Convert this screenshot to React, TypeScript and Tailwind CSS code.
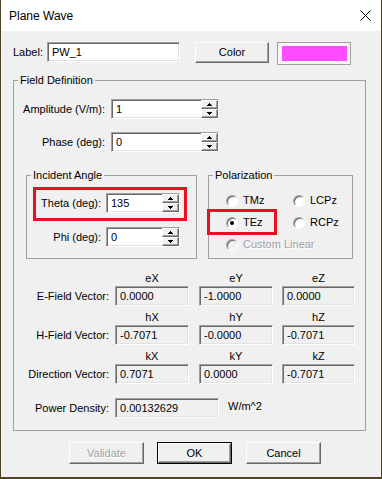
import type React from "react";

const sunken =
  "border border-[#a0a0a0] border-r-white border-b-white shadow-[inset_1px_1px_0_#696969,inset_-1px_-1px_0_#e3e3e3]";
const raised =
  "border border-white border-r-[#696969] border-b-[#696969] shadow-[inset_-1px_-1px_0_#a0a0a0]";

function Arrow({ up }: { up?: boolean }) {
  return (
    <svg width="5" height="3" viewBox="0 0 5 3" shapeRendering="crispEdges">
      {up ? (
        <>
          <rect x="2" y="0" width="1" height="1" fill="#000" />
          <rect x="1" y="1" width="3" height="1" fill="#000" />
          <rect x="0" y="2" width="5" height="1" fill="#000" />
        </>
      ) : (
        <>
          <rect x="0" y="0" width="5" height="1" fill="#000" />
          <rect x="1" y="1" width="3" height="1" fill="#000" />
          <rect x="2" y="2" width="1" height="1" fill="#000" />
        </>
      )}
    </svg>
  );
}

function SpinBtn({ up }: { up?: boolean }) {
  return (
    <div className={`flex h-[9px] items-center justify-center bg-[#f0f0f0] ${raised}`}>
      <Arrow up={up} />
    </div>
  );
}

function Spin({ value, className }: { value: string; className: string }) {
  return (
    <div className={`flex h-[20px] bg-white ${sunken} ${className}`}>
      <span className="flex-1 pl-[4px] leading-[18px]">{value}</span>
      <div className="flex w-[17px] flex-col">
        <SpinBtn up />
        <SpinBtn />
      </div>
    </div>
  );
}

function Group({
  title,
  className,
  children,
}: {
  title: string;
  className: string;
  children: React.ReactNode;
}) {
  return (
    <fieldset className={`min-w-0 border border-[#a0a0a0] ${className}`}>
      <legend className="ml-[4px] px-[2px] leading-[13px]">{title}</legend>
      {children}
    </fieldset>
  );
}

function Radio({
  label,
  checked,
  disabled,
}: {
  label: string;
  checked?: boolean;
  disabled?: boolean;
}) {
  return (
    <div className="flex h-[13px] items-center gap-[5px] whitespace-nowrap">
      <span
        className={`flex h-[12px] w-[12px] shrink-0 items-center justify-center rounded-full border border-[#a0a0a0] border-r-white border-b-white shadow-[inset_1px_1px_0_#696969] ${
          disabled ? "bg-[#f0f0f0]" : "bg-white"
        }`}
      >
        {checked && <span className="h-[4px] w-[4px] rounded-full bg-black" />}
      </span>
      <span className={disabled ? "text-[#a0a0a0] [text-shadow:1px_1px_0_#fff]" : ""}>
        {label}
      </span>
    </div>
  );
}

function ReadBox({ value, className }: { value: string; className: string }) {
  return (
    <div className={`h-[20px] bg-[#f0f0f0] pl-[4px] leading-[18px] ${sunken} ${className}`}>
      {value}
    </div>
  );
}

function Button({
  label,
  disabled,
  isDefault,
}: {
  label: string;
  disabled?: boolean;
  isDefault?: boolean;
}) {
  const face = (
    <div
      className={`flex h-full w-full items-center justify-center bg-[#f0f0f0] ${raised} ${
        disabled ? "text-[#a0a0a0] [text-shadow:1px_1px_0_#fff]" : ""
      }`}
    >
      {label}
    </div>
  );
  return isDefault ? (
    <div className="h-[22px] w-[75px] border border-black">{face}</div>
  ) : (
    <div className="h-[22px] w-[75px]">{face}</div>
  );
}

const vectors = [
  { name: "E-Field Vector:", heads: ["eX", "eY", "eZ"], vals: ["0.0000", "-1.0000", "0.0000"] },
  { name: "H-Field Vector:", heads: ["hX", "hY", "hZ"], vals: ["-0.7071", "-0.0000", "-0.7071"] },
  { name: "Direction Vector:", heads: ["kX", "kY", "kZ"], vals: ["0.7071", "0.0000", "-0.7071"] },
];

export default function App() {
  return (
    <div className="flex h-[479px] w-[382px] flex-col border-x border-b-2 border-[#4f4322] font-['Liberation_Sans',Arial,sans-serif] text-[11px] text-black">
      {/* Title bar */}
      <div className="flex h-[31px] items-center justify-between bg-white pl-[8px] pr-[10px]">
        <span className="text-[12px]">Plane Wave</span>
        <svg width="11" height="11" viewBox="0 0 11 11">
          <path d="M0.5 0.5 L10.5 10.5 M10.5 0.5 L0.5 10.5" stroke="#000" strokeWidth="1" />
        </svg>
      </div>

      {/* Body */}
      <div className="flex flex-1 flex-col bg-[#f0f0f0] pl-[12px]">
        <div className="mt-[11px] flex items-start">
          <span className="w-[34px] leading-[20px]">Label:</span>
          <div className={`h-[20px] w-[133px] bg-white pl-[4px] leading-[18px] ${sunken}`}>PW_1</div>
          <div className="ml-[15px] h-[21px] w-[74px]">
            <div className={`flex h-full w-full items-center justify-center bg-[#f0f0f0] ${raised}`}>
              Color
            </div>
          </div>
          <div className="ml-[8px] h-[23px] w-[74px] border border-[#a0a0a0] bg-[#f7f7f7] p-[3px] pl-[4px]">
            <div className="h-full w-full bg-[#ff4cff]" />
          </div>
        </div>

        <Group title="Field Definition" className="mt-[9px] w-[353px] pb-[12px]">
          <div className="mt-[12px] flex items-center">
            <span className="w-[91px] text-right">Amplitude (V/m):</span>
            <Spin value="1" className="ml-[6px] w-[108px]" />
          </div>
          <div className="mt-[13px] flex items-center">
            <span className="w-[91px] text-right">Phase (deg):</span>
            <Spin value="0" className="ml-[6px] w-[108px]" />
          </div>

          <div className="mt-[17px] flex gap-[11px] pl-[12px]">
            <Group title="Incident Angle" className="h-[90px] w-[171px]">
              <div className="ml-[6px] mt-[5px] flex w-[154px] items-start border-[3px] border-[#e81123] pb-[5px] pl-[4px] pr-[4px] pt-[3px]">
                <span className="w-[61px] text-right leading-[20px]">Theta (deg):</span>
                <Spin value="135" className="ml-[5px] w-[74px]" />
              </div>
              <div className="ml-[13px] mt-[6px] flex items-center">
                <span className="w-[61px] text-right">Phi (deg):</span>
                <Spin value="0" className="ml-[5px] w-[74px]" />
              </div>
            </Group>

            <Group title="Polarization" className="h-[90px] w-[145px]">
              <div className="mt-[12px] grid grid-cols-[67px_auto] gap-y-[9px] pl-[17px]">
                <Radio label="TMz" />
                <Radio label="LCPz" />
                <div className="relative">
                  <Radio label="TEz" checked />
                  <div className="absolute left-[-19px] top-[-7px] h-[26px] w-[70px] border-[3px] border-[#e81123]" />
                </div>
                <Radio label="RCPz" />
                <div className="col-span-2">
                  <Radio label="Custom Linear" disabled />
                </div>
              </div>
            </Group>
          </div>

          <div className="mt-[13px] flex flex-col">
            {vectors.map((v, i) => (
              <div key={v.name} className={i === 0 ? "" : "mt-[5px]"}>
                <div className="flex leading-[13px]">
                  <span className="w-[95px]" />
                  <span className="ml-[6px] w-[74px] text-center">{v.heads[0]}</span>
                  <span className="ml-[10px] w-[74px] text-center">{v.heads[1]}</span>
                  <span className="ml-[9px] w-[73px] text-center">{v.heads[2]}</span>
                </div>
                <div className="mt-[1px] flex items-center">
                  <span className="w-[95px] text-right">{v.name}</span>
                  <ReadBox value={v.vals[0]} className="ml-[6px] w-[74px]" />
                  <ReadBox value={v.vals[1]} className="ml-[10px] w-[74px]" />
                  <ReadBox value={v.vals[2]} className="ml-[9px] w-[73px]" />
                </div>
              </div>
            ))}
          </div>

          <div className="mt-[14px] flex items-center">
            <span className="w-[95px] text-right">Power Density:</span>
            <ReadBox value="0.00132629" className="ml-[6px] w-[104px]" />
            <span className="ml-[9px] -mt-[3px]">W/m^2</span>
          </div>
        </Group>

        <div className="mt-[11px] flex pl-[56px]">
          <Button label="Validate" disabled />
          <div className="ml-[13px]">
            <Button label="OK" isDefault />
          </div>
          <div className="ml-[14px]">
            <Button label="Cancel" />
          </div>
        </div>
      </div>
    </div>
  );
}
